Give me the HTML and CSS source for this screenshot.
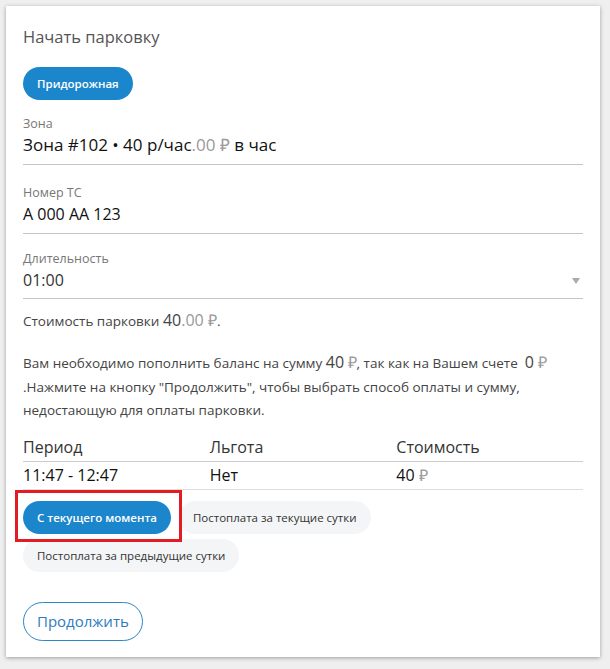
FILE: index.html
```html
<!DOCTYPE html>
<html lang="ru">
<head>
<meta charset="utf-8">
<title>Начать парковку</title>
<link rel="stylesheet" href="styles.css">
</head>
<body>
<div class="card">
  <h1 class="title">Начать парковку</h1>
  <div class="tabs">
    <span class="pill pill-active">Придорожная</span>
  </div>
  <div class="field field-zone">
    <div class="label">Зона</div>
    <div class="value value-zone">Зона #102 • 40 р/час<span class="muted">.00 ₽</span> в час</div>
  </div>
  <div class="field field-num">
    <div class="label">Номер ТС</div>
    <div class="value">А 000 АА 123</div>
  </div>
  <div class="field field-dur">
    <div class="label">Длительность</div>
    <div class="value select">01:00<span class="caret"></span></div>
  </div>
  <p class="cost">Стоимость парковки <span class="big">40</span><span class="big muted">.00 ₽</span>.</p>
  <p class="notice">Вам необходимо пополнить баланс на сумму <span class="big">40</span> <span class="big muted">₽</span>, так как на Вашем счете &nbsp;<span class="big">0</span> <span class="big muted">₽</span> .Нажмите на кнопку "Продолжить", чтобы выбрать способ оплаты и сумму, недостающую для оплаты парковки.</p>
  <div class="table">
    <div class="row head">
      <div class="cell">Период</div>
      <div class="cell">Льгота</div>
      <div class="cell">Стоимость</div>
    </div>
    <div class="row">
      <div class="cell">11:47 - 12:47</div>
      <div class="cell">Нет</div>
      <div class="cell">40 <span class="muted">₽</span></div>
    </div>
  </div>
  <div class="options">
    <span class="pill pill-active opt opt-marked">С текущего момента</span>
    <span class="pill pill-light opt">Постоплата за текущие сутки</span>
    <span class="pill pill-light opt">Постоплата за предыдущие сутки</span>
  </div>
  <div class="actions">
    <button class="btn-outline">Продолжить</button>
  </div>
</div>
</body>
</html>
```
FILE: styles.css
```css
html, body {
  margin: 0;
  padding: 0;
  background: #efefef;
}
body {
  padding: 6px 10px 12px 6px;
  font-family: "Open Sans", "Liberation Sans", sans-serif;
  color: #222;
}
.card {
  background: #fff;
  box-shadow: 0 1px 4px rgba(0,0,0,0.35);
  padding: 15px 17px 16px 17px;
  height: 620px;
}
.title {
  margin: 0;
  font-size: 16.5px;
  font-weight: 400;
  color: #555;
  line-height: 32px;
}
.tabs {
  margin-top: 14px;
  display: flex;
}
.pill {
  display: inline-flex;
  align-items: center;
  height: 33px;
  padding: 0 14px;
  border-radius: 17px;
  font-size: 11.5px;
  box-sizing: border-box;
  white-space: nowrap;
}
.pill-active {
  background: #1b86cb;
  color: #fff;
  font-weight: 600;
}
.pill-light {
  background: #f4f5f7;
  color: #333;
}
.field {
  border-bottom: 1px solid #c4c4c4;
}
.field-zone { margin-top: 15px; padding-bottom: 7px; }
.field-num { margin-top: 19px; padding-bottom: 7px; }
.field-dur { margin-top: 16px; padding-bottom: 6px; }
.label {
  font-size: 12.5px;
  color: #777;
  line-height: 18px;
}
.value {
  font-size: 16px;
  line-height: 24px;
  color: #111;
}
.value-zone {
  font-size: 17px;
}
.select {
  position: relative;
  color: #333;
}
.caret {
  position: absolute;
  right: 3px;
  top: 10px;
  width: 0;
  height: 0;
  border-left: 4px solid transparent;
  border-right: 4px solid transparent;
  border-top: 6px solid #aaa;
}
.muted { color: #999; }
.big { font-size: 16px; }
.cost {
  margin: 10px 0 0 0;
  font-size: 13.5px;
  color: #444;
  line-height: 22px;
}
.notice {
  margin: 19px 0 0 0;
  font-size: 13.5px;
  color: #444;
  line-height: 23.5px;
}
.table {
  margin-top: 11px;
}
.row {
  display: grid;
  grid-template-columns: 1fr 1fr 1fr;
  border-bottom: 1px solid #ddd;
  font-size: 16px;
  line-height: 27px;
  color: #111;
}
.row.head {
  color: #333;
  border-bottom-color: #ccc;
}
.options {
  display: flex;
  flex-wrap: wrap;
  gap: 5px 8px;
  margin-top: 11px;
  width: 370px;
}
.opt { font-size: 11.5px; }
.opt-marked { position: relative; }
.opt-marked::after {
  content: "";
  position: absolute;
  left: -8px;
  top: -11px;
  right: -11px;
  bottom: -8px;
  border: 3px solid #e31b23;
}
.actions {
  margin-top: 30px;
}
.btn-outline {
  font-family: inherit;
  background: #fff;
  border: 1px solid #2d86c6;
  color: #2d7bbf;
  font-size: 15px;
  height: 39px;
  padding: 0 13px;
  border-radius: 20px;
}
```
